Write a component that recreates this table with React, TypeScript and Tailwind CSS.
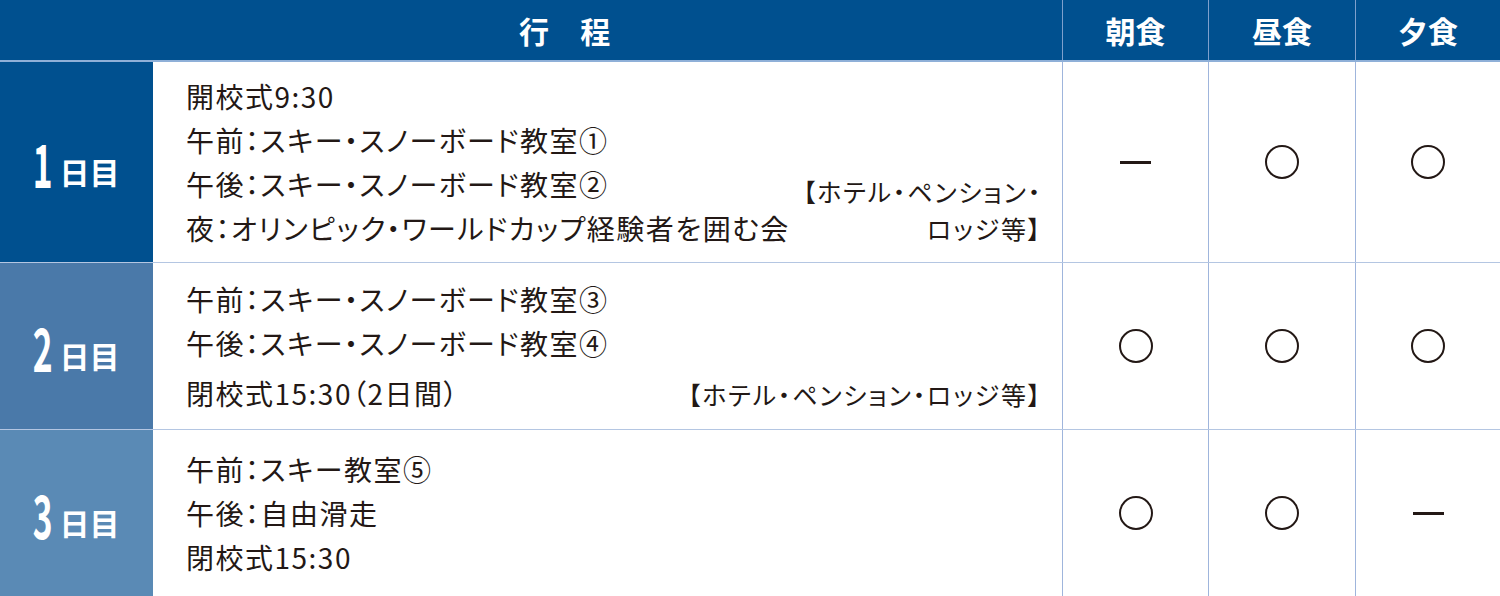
import React from "react"

const font = "font-['Noto_Sans_CJK_JP','Noto_Sans',sans-serif]"

type Meal = "o" | "-"

interface DayRow {
  day: string
  color: string
  lines: string[]
  note?: string[]
  noteMb?: string
  meals: Meal[]
  height: string
}

const rows: DayRow[] = [
  {
    day: "1",
    color: "bg-[#00508f]",
    lines: [
      "開校式9:30",
      "午前：スキー・スノーボード教室①",
      "午後：スキー・スノーボード教室②",
      "夜：オリンピック・ワールドカップ経験者を囲む会",
    ],
    note: ["【ホテル・ペンション・", "ロッジ等】"],
    noteMb: "mb-[15px]",
    meals: ["-", "o", "o"],
    height: "h-[201px]",
  },
  {
    day: "2",
    color: "bg-[#4a79a9]",
    lines: ["午前：スキー・スノーボード教室③", "午後：スキー・スノーボード教室④", "閉校式15:30（2日間）"],
    note: ["【ホテル・ペンション・ロッジ等】"],
    noteMb: "mb-[16px]",
    meals: ["o", "o", "o"],
    height: "h-[167px]",
  },
  {
    day: "3",
    color: "bg-[#5a8ab5]",
    lines: ["午前：スキー教室⑤", "午後：自由滑走", "閉校式15:30"],
    meals: ["o", "o", "-"],
    height: "h-[166px]",
  },
]

function MealMark({ type }: { type: Meal }) {
  if (type === "-") return <div className="w-[31px] h-[3px] bg-[#231815]" />
  return <div className="w-[34px] h-[34px] rounded-full border-2 border-[#231815]" />
}

function DayLabel({ day }: { day: string }) {
  return (
    <div className="flex items-end text-white leading-none">
      <span className="w-[19px] flex justify-center">
        <span className="inline-block scale-x-[0.56] text-[60px] font-bold leading-none">{day}</span>
      </span>
      <span className="ml-[7px] mb-[6px] text-[30px] font-bold leading-none">日目</span>
    </div>
  )
}

export default function App() {
  return (
    <div className={`w-[1500px] h-[596px] bg-white ${font} [font-feature-settings:'palt']`}>
      {/* header */}
      <div className="flex h-[62px] bg-[#00508f] border-b-2 border-[#8fb0d8] text-white text-[30px] font-bold">
        <div className="w-[1062px] flex items-center justify-center pl-[68px] tracking-[0.02em]">行　程</div>
        <div className="w-[146px] flex items-center justify-center border-l border-[#7fa0cc]">朝食</div>
        <div className="w-[147px] flex items-center justify-center border-l border-[#7fa0cc]">昼食</div>
        <div className="flex-1 flex items-center justify-center border-l border-[#7fa0cc]">夕食</div>
      </div>

      {rows.map((row, i) => (
        <div key={row.day} className={`flex ${row.height} ${i < rows.length - 1 ? "border-b border-[#b4c6e2]" : ""}`}>
          <div className={`w-[153px] flex items-center justify-center ${row.color}`}>
            <DayLabel day={row.day} />
          </div>
          <div className="w-[909px] flex items-center justify-between pl-[33px] pr-[20px] text-[#231815]">
            <div className="text-[28px] leading-[44px] tracking-[1.5px]">
              {row.lines.map((l, j) => (
                <div key={j} className={row.day === "2" && j === 2 ? "mt-[6px]" : ""}>
                  {l}
                </div>
              ))}
            </div>
            {row.note && (
              <div className={`self-end ${row.noteMb} text-right text-[25px] leading-[37px] tracking-[1.8px]`}>
                {row.note.map((n, j) => (
                  <div key={j}>{n}</div>
                ))}
              </div>
            )}
          </div>
          {row.meals.map((m, j) => (
            <div
              key={j}
              className={`${j === 0 ? "w-[146px]" : j === 1 ? "w-[147px]" : "flex-1"} flex items-center justify-center border-l border-[#9fb5dc]`}
            >
              <MealMark type={m} />
            </div>
          ))}
        </div>
      ))}
    </div>
  )
}
